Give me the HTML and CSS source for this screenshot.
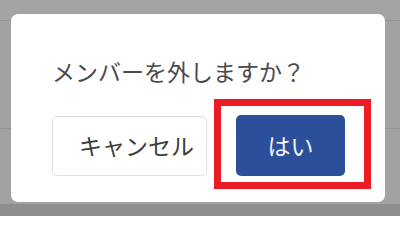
FILE: index.html
```html
<!DOCTYPE html>
<html lang="ja">
<head>
<meta charset="utf-8">
<link rel="stylesheet" href="styles.css">
</head>
<body>
<div class="screen">
  <div class="backdrop">
    <div class="bg-row bg-row-top"></div>
    <div class="bg-row bg-row-mid"></div>
    <div class="bg-row bg-row-low"></div>
    <div class="bg-foot"></div>
  </div>
  <div class="dialog">
    <p class="dialog-title">メンバーを外しますか？</p>
    <div class="dialog-actions">
      <button class="btn btn-cancel">キャンセル</button>
      <button class="btn btn-ok">はい</button>
    </div>
  </div>
  <div class="highlight"></div>
</div>
</body>
</html>
```

FILE: styles.css
```css
html, body {
  margin: 0;
  padding: 0;
}
body {
  width: 400px;
  height: 216px;
  overflow: hidden;
  font-family: "Noto Sans CJK JP", "Noto Sans", sans-serif;
}
.screen {
  position: relative;
  width: 400px;
  height: 216px;
  overflow: hidden;
}
.backdrop {
  display: flex;
  flex-direction: column;
  width: 400px;
  height: 216px;
  background: #a1a1a1;
}
.bg-row {
  border-bottom: 1px solid #949494;
  background: #a2a2a2;
}
.bg-row-top {
  height: 20px;
  background: #a4a4a4;
}
.bg-row-mid {
  height: 107px;
}
.bg-row-low {
  height: 75px;
  border-bottom: 0;
}
.bg-foot {
  flex: 1;
  background: #8e8e8e;
}
.dialog {
  position: absolute;
  left: 11px;
  top: 14px;
  width: 374px;
  height: 188px;
  box-sizing: border-box;
  padding: 41px 40px 0 41px;
  background: #ffffff;
  border-radius: 7px;
}
.dialog-title {
  margin: 0;
  font-size: 23px;
  line-height: 32px;
  color: #4a4a4a;
  white-space: nowrap;
}
.dialog-actions {
  display: flex;
  align-items: center;
  gap: 29px;
  margin-top: 28px;
}
.btn {
  display: flex;
  align-items: center;
  justify-content: center;
  box-sizing: border-box;
  margin: 0;
  font-family: inherit;
  font-size: 23px;
  line-height: 1;
  border-radius: 5px;
  cursor: pointer;
}
.btn-cancel {
  width: 155px;
  height: 60px;
  padding: 0 0 0 14px;
  background: #ffffff;
  color: #3c3c3c;
  border: 1px solid #e0e0e0;
}
.btn-ok {
  width: 109px;
  height: 61px;
  padding: 0;
  background: #2c4f9a;
  color: #f2f4f8;
  border: 0;
}
.highlight {
  position: absolute;
  left: 214px;
  top: 99px;
  width: 157px;
  height: 90px;
  box-sizing: border-box;
  border: 7px solid #ec1c24;
}
```
